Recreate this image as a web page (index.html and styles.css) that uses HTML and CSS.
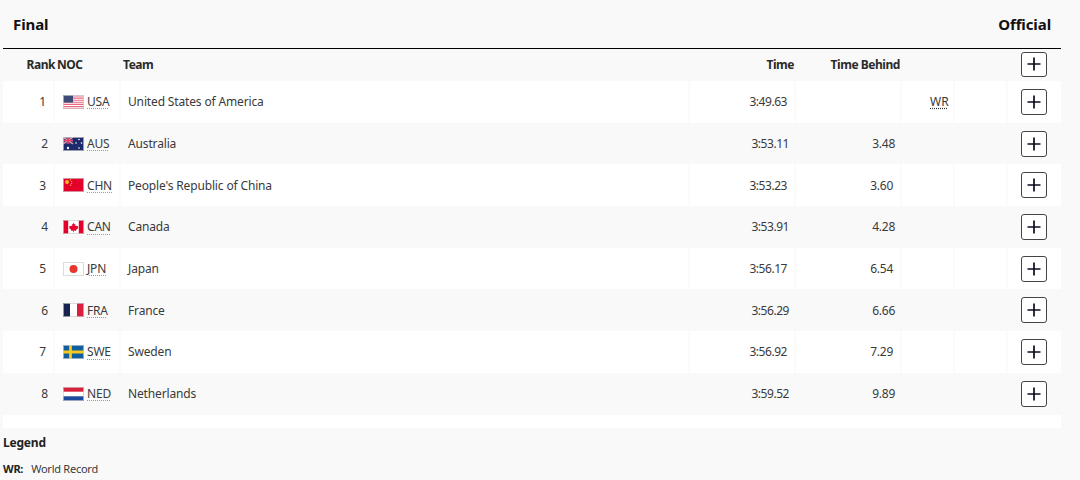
FILE: index.html
```html
<!DOCTYPE html>
<html lang="en">
<head>
<meta charset="utf-8">
<title>Final</title>
<link rel="stylesheet" href="styles.css">
</head>
<body>
<svg class="defs" width="0" height="0" aria-hidden="true">
  <symbol id="plus" viewBox="0 0 14 14"><path d="M7 .5v13M.5 7h13" fill="none" stroke="#0b0b1e" stroke-width="1.7"/></symbol>
</svg>
<main class="page">
  <header class="title-bar"><h2 class="title">Final</h2><span class="title">Official</span></header>
  <section class="results">
    <div class="row head">
      <div class="c rank">Rank</div><div class="c noc">NOC</div><div class="c team">Team</div>
      <div class="c time">Time</div><div class="c behind">Time Behind</div><div class="c"></div><div class="c"></div>
      <div class="c act"><button class="plus"><svg><use href="#plus"/></svg></button></div>
    </div>

    <div class="row">
      <div class="c rank">1</div>
      <div class="c noc"><svg class="flag" viewBox="0 0 21 14"><rect width="21" height="14" fill="#fff"/><path d="M0 1h21M0 3.1h21M0 5.2h21M0 7.3h21M0 9.4h21M0 11.5h21M0 13.4h21" stroke="#e8687f" stroke-width="1.1"/><rect width="10" height="7.5" fill="#3d4d78"/></svg><abbr class="code">USA</abbr></div>
      <div class="c team">United States of America</div>
      <div class="c time">3:49.63</div><div class="c behind"></div>
      <div class="c rec"><abbr class="code wr">WR</abbr></div><div class="c"></div>
      <div class="c act"><button class="plus"><svg><use href="#plus"/></svg></button></div>
    </div>

    <div class="row">
      <div class="c rank">2</div>
      <div class="c noc"><svg class="flag" viewBox="0 0 21 14"><rect width="21" height="14" fill="#1d2a6d"/><rect width="10" height="7" fill="#3b3f7a"/><path d="M0 0l10 7M10 0L0 7" stroke="#e0a0b0" stroke-width="1.4"/><path d="M5 0v7M0 3.5h10" stroke="#e8415f" stroke-width="1.6"/><circle cx="5" cy="11" r="1.2" fill="#fff"/><circle cx="16" cy="2.5" r=".8" fill="#fff"/><circle cx="13" cy="6" r=".8" fill="#fff"/><circle cx="18.5" cy="6" r=".8" fill="#fff"/><circle cx="16" cy="11" r=".8" fill="#fff"/></svg><abbr class="code">AUS</abbr></div>
      <div class="c team">Australia</div>
      <div class="c time">3:53.11</div><div class="c behind">3.48</div>
      <div class="c rec"></div><div class="c"></div>
      <div class="c act"><button class="plus"><svg><use href="#plus"/></svg></button></div>
    </div>

    <div class="row">
      <div class="c rank">3</div>
      <div class="c noc"><svg class="flag" viewBox="0 0 21 14"><rect width="21" height="14" fill="#e4002b"/><circle cx="4" cy="4" r="2" fill="#f5b52e"/><circle cx="7.5" cy="1.8" r=".7" fill="#f5b52e"/><circle cx="8.6" cy="3.6" r=".7" fill="#f5b52e"/><circle cx="8.6" cy="5.6" r=".7" fill="#f5b52e"/><circle cx="7.5" cy="7.2" r=".7" fill="#f5b52e"/></svg><abbr class="code">CHN</abbr></div>
      <div class="c team">People's Republic of China</div>
      <div class="c time">3:53.23</div><div class="c behind">3.60</div>
      <div class="c rec"></div><div class="c"></div>
      <div class="c act"><button class="plus"><svg><use href="#plus"/></svg></button></div>
    </div>

    <div class="row">
      <div class="c rank">4</div>
      <div class="c noc"><svg class="flag" viewBox="0 0 21 14"><rect width="21" height="14" fill="#fff"/><rect width="5.2" height="14" fill="#e4002b"/><rect x="15.8" width="5.2" height="14" fill="#e4002b"/><path d="M10.5 2.6l1 1.9 1-.5-.4 2.3 1.3-.9.4.9 1.5-.2-.5 1.5.6.4-2.4 1.9.3 1-2.3-.4v1.8h-.6V10.500l-2.300.4.3-1-2.400-1.900.6-.4-.5-1.500 1.500.2.4-.9 1.300.9-.4-2.300 1 .5z" fill="#e4002b"/></svg><abbr class="code">CAN</abbr></div>
      <div class="c team">Canada</div>
      <div class="c time">3:53.91</div><div class="c behind">4.28</div>
      <div class="c rec"></div><div class="c"></div>
      <div class="c act"><button class="plus"><svg><use href="#plus"/></svg></button></div>
    </div>

    <div class="row">
      <div class="c rank">5</div>
      <div class="c noc"><svg class="flag" viewBox="0 0 21 14"><rect width="21" height="14" fill="#fff"/><circle cx="10.500" cy="7" r="4" fill="#e8352e"/></svg><abbr class="code">JPN</abbr></div>
      <div class="c team">Japan</div>
      <div class="c time">3:56.17</div><div class="c behind">6.54</div>
      <div class="c rec"></div><div class="c"></div>
      <div class="c act"><button class="plus"><svg><use href="#plus"/></svg></button></div>
    </div>

    <div class="row">
      <div class="c rank">6</div>
      <div class="c noc"><svg class="flag" viewBox="0 0 21 14"><rect width="21" height="14" fill="#fff"/><rect width="7" height="14" fill="#16244f"/><rect x="14" width="7" height="14" fill="#dc1f3c"/></svg><abbr class="code">FRA</abbr></div>
      <div class="c team">France</div>
      <div class="c time">3:56.29</div><div class="c behind">6.66</div>
      <div class="c rec"></div><div class="c"></div>
      <div class="c act"><button class="plus"><svg><use href="#plus"/></svg></button></div>
    </div>

    <div class="row">
      <div class="c rank">7</div>
      <div class="c noc"><svg class="flag" viewBox="0 0 21 14"><rect width="21" height="14" fill="#0f5f9e"/><path d="M7.500 0v14M0 7h21" stroke="#f7c81e" stroke-width="2.800"/></svg><abbr class="code">SWE</abbr></div>
      <div class="c team">Sweden</div>
      <div class="c time">3:56.92</div><div class="c behind">7.29</div>
      <div class="c rec"></div><div class="c"></div>
      <div class="c act"><button class="plus"><svg><use href="#plus"/></svg></button></div>
    </div>

    <div class="row">
      <div class="c rank">8</div>
      <div class="c noc"><svg class="flag" viewBox="0 0 21 14"><rect width="21" height="14" fill="#fff"/><rect width="21" height="4.700" fill="#d8203a"/><rect y="9.300" width="21" height="4.700" fill="#1c4a9c"/></svg><abbr class="code">NED</abbr></div>
      <div class="c team">Netherlands</div>
      <div class="c time">3:59.52</div><div class="c behind">9.89</div>
      <div class="c rec"></div><div class="c"></div>
      <div class="c act"><button class="plus"><svg><use href="#plus"/></svg></button></div>
    </div>
    <div class="foot"></div>
  </section>
  <section class="legend">
    <h3 class="legend-title">Legend</h3>
    <p class="legend-item"><strong class="legend-key">WR:</strong><span>World Record</span></p>
  </section>
</main>
</body>
</html>
```
FILE: styles.css
```css
* { box-sizing: border-box; }
html, body { margin: 0; padding: 0; }
body {
  width: 1080px;
  height: 480px;
  overflow: hidden;
  background: #f9f9f9;
  color: #3a3a3a;
  font-family: "Noto Sans", "Open Sans", sans-serif;
  font-size: 12px;
}
.defs { position: absolute; }
.page { padding-left: 3px; width: 1061px; }
.title-bar {
  height: 49px;
  padding: 0 10px 1px 10px;
  display: flex;
  justify-content: space-between;
  align-items: center;
  border-bottom: 1px solid #000;
}
.title { margin: 0; font-size: 15px; font-weight: 700; color: #111; letter-spacing: -.1px; }
.row {
  display: grid;
  grid-template-columns: 52px 66px 569px 106px 106px 53px 53px 53px;
  height: 41.69px;
  align-items: stretch;
}
.row:nth-child(even) { background: #fff; }
.row:nth-child(even) .c { border-right: 2px solid #fbfbfb; }
.row .c:last-child { border-right: 0; }
.c { display: flex; align-items: center; min-width: 0; white-space: nowrap; }
.head { height: 32px; font-weight: 700; color: #2a2a2a; letter-spacing: -.45px; padding-bottom: 2px; }
.rank { justify-content: flex-end; padding-right: 7px; }
.noc { padding-left: 8px; gap: 3px; letter-spacing: -.2px; }
.team { padding-left: 7px; letter-spacing: -.15px; }
.time, .behind { justify-content: flex-end; }
.time { padding-right: 7px; letter-spacing: -.45px; }
.behind { padding-right: 7px; letter-spacing: -.25px; }
.head .rank { padding-right: 0; }
.head .noc { padding-left: 2px; letter-spacing: -.45px; }
.head .team { padding-left: 2px; letter-spacing: -.45px; }
.head .time { padding-right: 2px; letter-spacing: -.45px; }
.head .behind { padding-right: 2px; letter-spacing: -.45px; }
.rec { padding-left: 28px; }
.act { padding-left: 13px; }
.head .act { padding-bottom: 0; }
.flag { width: 21px; height: 14px; flex: none; outline: 1px solid rgba(205, 205, 205, .7); outline-offset: -1px; }
.code { text-decoration: underline dotted #9a9a9a; text-underline-offset: 2px; }
.wr { text-decoration-color: #333; }
.plus {
  width: 26px;
  height: 26px;
  padding: 0;
  display: flex;
  align-items: center;
  justify-content: center;
  background: #fff;
  border: 1px solid #444;
  border-radius: 3px;
}
.head .plus { height: 25px; }
.plus svg { width: 14px; height: 14px; }
.foot { height: 13.5px; background: #fff; }
.legend-title { margin: 0; padding-top: 2px; font-size: 12px; font-weight: 700; line-height: 16px; color: #222; height: 28px; display: flex; align-items: center; letter-spacing: -.2px; }
.legend-item { margin: 0; padding-top: 5px; display: flex; gap: 8px; font-size: 11px; line-height: 16px; letter-spacing: -.25px; }
.legend-key { color: #222; }
```
